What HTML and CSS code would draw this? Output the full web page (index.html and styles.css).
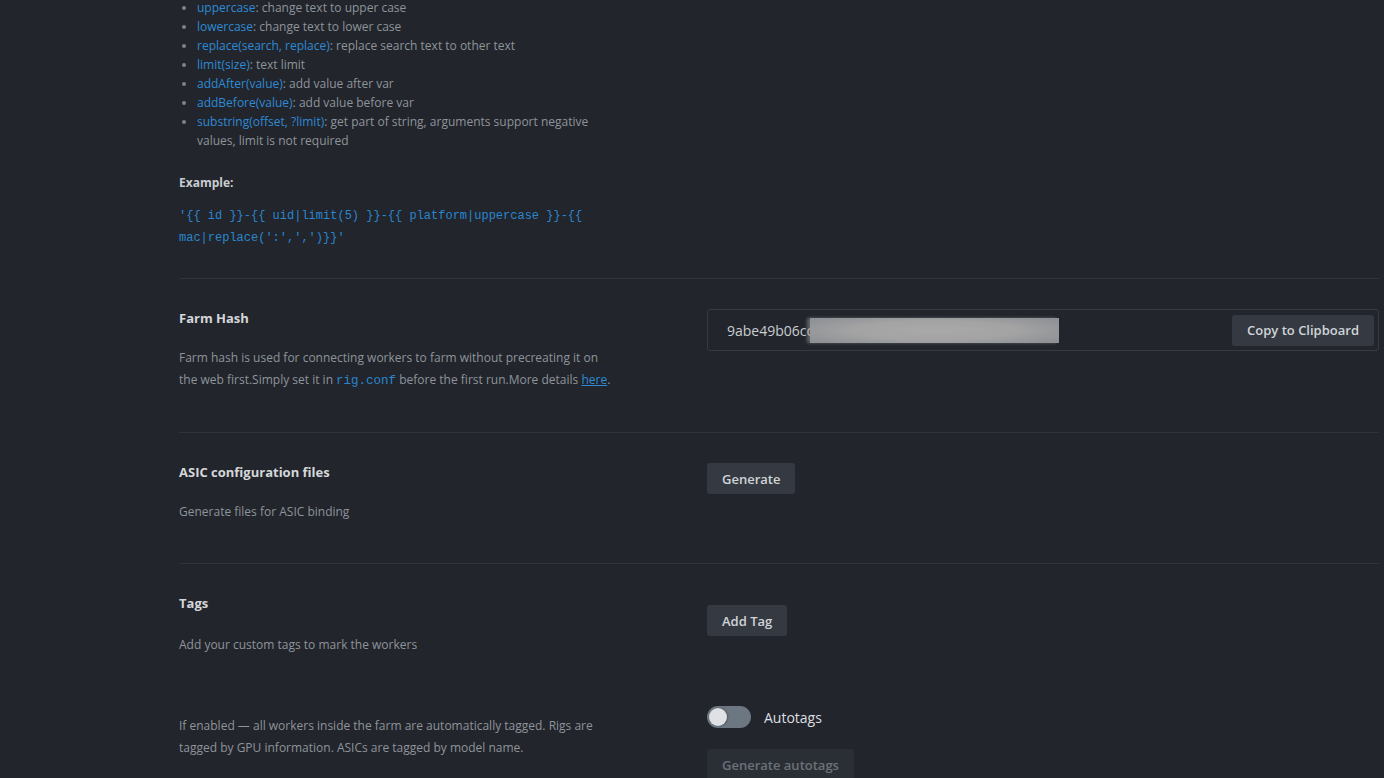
FILE: index.html
```html
<!DOCTYPE html>
<html>
<head>
<meta charset="utf-8">
<link rel="stylesheet" href="styles.css">
</head>
<body>
<div class="page">
  <div class="intro">
    <ul class="filters">
      <li><span class="fn">uppercase</span>: change text to upper case</li>
      <li><span class="fn">lowercase</span>: change text to lower case</li>
      <li><span class="fn">replace(search, replace)</span>: replace search text to other text</li>
      <li><span class="fn">limit(size)</span>: text limit</li>
      <li><span class="fn">addAfter(value)</span>: add value after var</li>
      <li><span class="fn">addBefore(value)</span>: add value before var</li>
      <li><span class="fn">substring(offset, ?limit)</span>: get part of string, arguments support negative values, limit is not required</li>
    </ul>
    <div class="example-label">Example:</div>
    <code class="example">'{{ id }}-{{ uid|limit(5) }}-{{ platform|uppercase }}-{{ mac|replace(':',',')}}'</code>
  </div>

  <section class="row">
    <div class="info">
      <h3 class="title">Farm Hash</h3>
      <p class="desc">Farm hash is used for connecting workers to farm without precreating it on the web first.Simply set it in <code class="inline">rig.conf</code> before the first run.More details <a href="#" class="link">here</a>.</p>
    </div>
    <div class="control">
      <div class="hash-box">
        <span class="hash-text">9abe49b06c<span class="cut">c</span></span>
        <span class="blur"></span>
        <button class="btn copy">Copy to Clipboard</button>
      </div>
    </div>
  </section>

  <section class="row">
    <div class="info">
      <h3 class="title">ASIC configuration files</h3>
      <p class="desc">Generate files for ASIC binding</p>
    </div>
    <div class="control">
      <button class="btn">Generate</button>
    </div>
  </section>

  <section class="row last">
    <div class="info">
      <h3 class="title">Tags</h3>
      <p class="desc tags-desc">Add your custom tags to mark the workers</p>
    </div>
    <div class="control">
      <button class="btn tag-btn">Add Tag</button>
    </div>
    <div class="info auto-info">
      <p class="desc">If enabled — all workers inside the farm are automatically tagged. Rigs are tagged by GPU information. ASICs are tagged by model name.</p>
    </div>
    <div class="control auto-control">
      <label class="toggle-row">
        <span class="toggle"><span class="knob"></span></span>
        <span class="toggle-label">Autotags</span>
      </label>
      <button class="btn disabled">Generate autotags</button>
    </div>
  </section>
</div>
</body>
</html>
```

FILE: styles.css
```css
html, body {
  margin: 0;
  padding: 0;
  background: #22252b;
  height: 100%;
  overflow: hidden;
}
body {
  font-family: "Open Sans", "Noto Sans", sans-serif;
  color: #8e949b;
  font-size: 12px;
}
.page {
  width: 1200px;
  margin: -2px 0 0 179px;
}
.intro {
  width: 1200px;
  padding-bottom: 29px;
  border-bottom: 1px solid #30343a;
}
.filters {
  margin: 0;
  padding: 0 0 0 18px;
  width: 422px;
  list-style: disc;
}
.filters li {
  line-height: 19px;
  color: #8e949b;
}
.filters li::marker {
  color: #7d838a;
  font-size: 11px;
}
.fn {
  color: #2e8ad6;
}
.example-label {
  margin-top: 23px;
  font-weight: 700;
  color: #c9cdd1;
  line-height: 19px;
}
.example {
  display: block;
  margin-top: 13px;
  width: 430px;
  font-family: "Liberation Mono", "DejaVu Sans Mono", monospace;
  font-size: 12px;
  line-height: 22px;
  color: #2a85cf;
  white-space: normal;
}
.row {
  display: grid;
  grid-template-columns: 528px 1fr;
  padding: 30px 0 40px;
  border-bottom: 1px solid #30343a;
}
.row.last {
  border-bottom: none;
  padding-bottom: 0;
}
.info {
  width: 440px;
}
.title {
  margin: 0;
  font-size: 13px;
  font-weight: 700;
  line-height: 18px;
  color: #d4d7da;
}
.desc {
  margin: 20px 0 0;
  line-height: 22px;
  color: #8e949b;
}
.tags-desc {
  margin-top: 22px;
}
.inline {
  font-family: "Liberation Mono", "DejaVu Sans Mono", monospace;
  font-size: 12.5px;
  color: #2a85cf;
}
.link {
  color: #2e8ad6;
  text-decoration: underline;
}
.control {
  display: flex;
  flex-direction: column;
  align-items: flex-start;
}
.hash-box {
  width: 100%;
  box-sizing: border-box;
  height: 42px;
  display: flex;
  align-items: center;
  border: 1px solid #363a41;
  border-radius: 3px;
  background: #22262c;
  padding: 0 4px 0 19px;
}
.hash-text {
  font-size: 14px;
  color: #c9ccd0;
  white-space: nowrap;
}
.cut {
  display: inline-block;
  width: 3px;
  overflow: hidden;
  vertical-align: bottom;
}
.blur {
  width: 249px;
  height: 25px;
  background: radial-gradient(ellipse 60% 70% at 50% 50%, #a9a9a9 0%, #a3a3a3 55%, #8f9196 100%);
  box-shadow: -3px 0 3px rgba(160,160,160,0.5);
}
.copy {
  margin-left: auto;
}
.btn {
  font-family: "Open Sans", "Noto Sans", sans-serif;
  font-size: 13px;
  font-weight: 600;
  color: #d0d4d8;
  background: #353a42;
  border: none;
  border-radius: 3px;
  height: 31px;
  padding: 0 15px;
  cursor: pointer;
}
.tag-btn {
  margin-top: 11px;
}
.auto-info {
  margin-top: 51px;
}
.auto-info .desc {
  margin-top: 8px;
}
.auto-control {
  margin-top: 50px;
}
.toggle-row {
  display: flex;
  align-items: center;
  height: 22px;
}
.toggle {
  display: flex;
  align-items: center;
  width: 44px;
  height: 22px;
  border-radius: 11px;
  background: #6d7781;
  padding: 0 2px;
  box-sizing: border-box;
}
.knob {
  width: 18px;
  height: 18px;
  border-radius: 50%;
  background: #dfe1e4;
  box-shadow: 1px 0 2px rgba(0,0,0,0.3);
}
.toggle-label {
  margin-left: 13px;
  font-size: 14px;
  color: #dcdfe2;
}
.btn.disabled {
  margin-top: 21px;
  background: #2a2f36;
  color: #6b727a;
  cursor: default;
}
```
